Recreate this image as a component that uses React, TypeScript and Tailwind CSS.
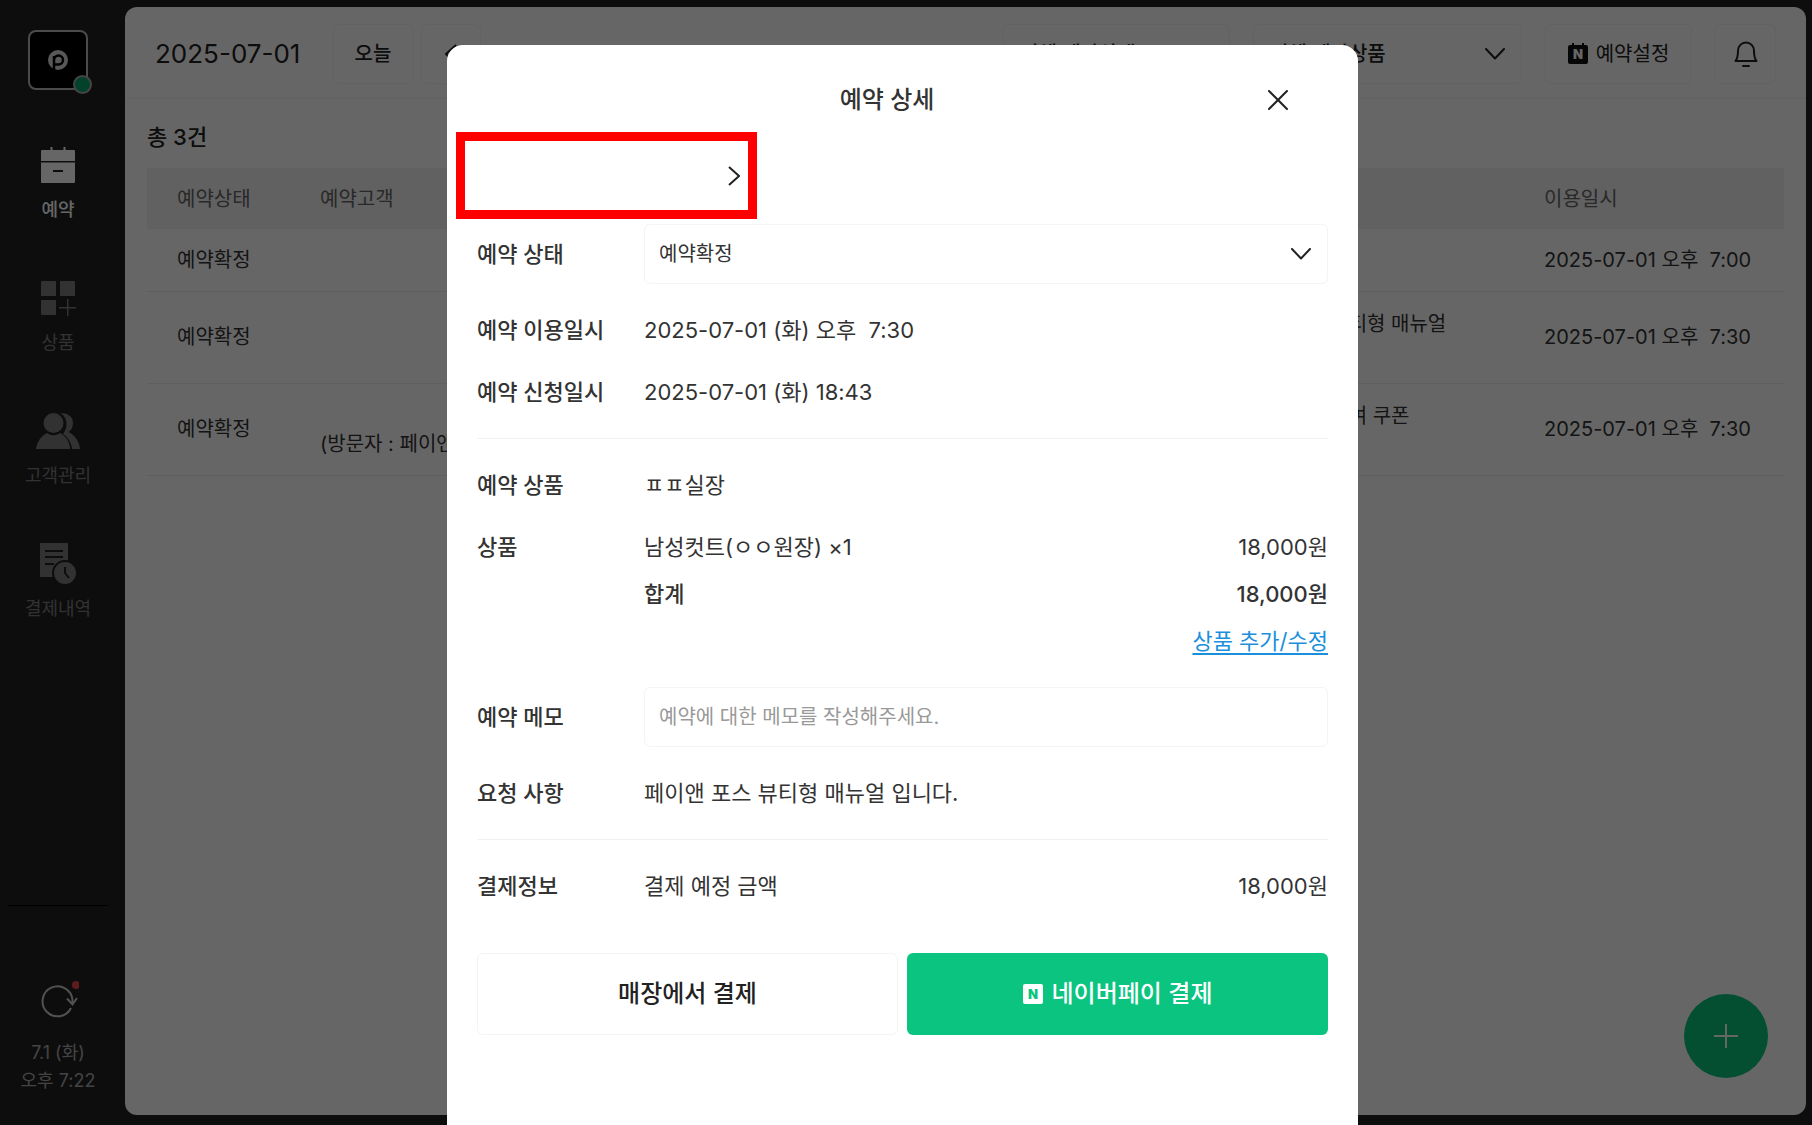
import { ReactNode } from 'react';

interface Booking {
  status: string;
  visitor?: string;
  product?: string;
  option?: string;
  date: string;
  height: string;
}

const bookings: Booking[] = [
  { status: '예약확정', date: '2025-07-01 오후\u00a0 7:00', height: 'h-[62px]' },
  { status: '예약확정', product: '페이앤 포스 뷰티형 매뉴얼', option: '남성컷트', date: '2025-07-01 오후\u00a0 7:30', height: 'h-[92px]' },
  { status: '예약확정', visitor: '페이앤', product: '첫방문 고객 참여 쿠폰', option: '남성컷트', date: '2025-07-01 오후\u00a0 7:30', height: 'h-[92px]' },
];

function ChevronDown() {
  return (
    <svg className="pointer-events-none absolute right-[17px] top-1/2 -translate-y-1/2" width="20" height="12" viewBox="0 0 20 12" fill="none" stroke="#222" strokeWidth="2" strokeLinecap="round" strokeLinejoin="round">
      <path d="M1 1l9 9.5L19 1" />
    </svg>
  );
}

function CalendarIcon() {
  return (
    <svg width="36" height="36" viewBox="0 0 36 36" fill="currentColor">
      <path d="M10.500 0h2v3h11V0h2v3H34a1 1 0 0 1 1 1v10H1V4a1 1 0 0 1 1-1h8.500z" />
      <path fillRule="evenodd" d="M1 15.500h34V35a1 1 0 0 1-1 1H2a1 1 0 0 1-1-1zM13 23v2h10v-2z" />
    </svg>
  );
}

function ProductIcon() {
  return (
    <svg width="36" height="36" viewBox="0 0 36 36" fill="currentColor">
      <rect x="1" y="1" width="15" height="15" rx="1" />
      <rect x="20" y="1" width="15" height="15" rx="1" />
      <rect x="1" y="20" width="15" height="15" rx="1" />
      <path d="M27 19h1.500v8H36v1.500h-7.500V36H27v-7.500h-8V27h8z" />
    </svg>
  );
}

function CustomerIcon() {
  return (
    <svg width="44" height="36" viewBox="0 0 44 36" fill="currentColor">
      <path d="M24 0c7 0 13 3 13 10 0 4-1.500 7-4.500 9C39 22 43.500 29 44 36h-8c-.5-6-4-12-9-15 2-2.500 3.500-6 3.500-10C30.500 6 28 2 24 0z" />
      <circle cx="17.500" cy="10" r="10" />
      <path d="M0 36c1-7 5-13 11-16 4 3 9 3 13 0 6 3 10 9 10 16z" />
    </svg>
  );
}

function HistoryIcon() {
  return (
    <svg width="38" height="42" viewBox="0 0 38 42" fill="none" stroke="#222" strokeWidth="2">
      <path d="M2 0h26a1 1 0 0 1 1 1v33H2a1 1 0 0 1-1-1V1a1 1 0 0 1 1-1z" fill="currentColor" stroke="none" />
      <path d="M6 8h18M6 14h18M6 21h9" />
      <circle cx="26" cy="30" r="12" fill="currentColor" />
      <path d="M26 24v6l4 5" />
    </svg>
  );
}

interface NavItemProps {
  icon: ReactNode;
  label: string;
  active?: boolean;
}

function NavItem({ icon, label, active }: NavItemProps) {
  return (
    <a href="#" className={`flex h-[133px] flex-col items-center ${active ? 'font-medium text-[#fff]' : 'text-[#7d7d7d]'}`}>
      <span className="flex h-[42px] items-center">{icon}</span>
      <span className="mt-3 text-[18px] leading-6">{label}</span>
    </a>
  );
}

function Sidebar() {
  return (
    <aside className="flex w-[125px] shrink-0 flex-col pr-[9px]">
      <div className="relative mx-auto mt-[30px] flex size-[60px] items-center justify-center rounded-lg border-2 border-[#bbb] bg-black">
        <svg width="20" height="20" viewBox="0 0 20 20">
          <circle cx="10" cy="10" r="10" fill="#ddd" />
          <path d="M6 20V6M6 10a4.500 4.500 0 1 1 4.500 4.500H6" fill="none" stroke="#000" strokeWidth="2.500" />
        </svg>
        <span className="absolute -bottom-1.5 -right-1.5 size-[19px] rounded-full border-2 border-[#aaa] bg-[#07a56c]"></span>
      </div>
      <nav className="mt-[54px] flex flex-col">
        <NavItem icon={<CalendarIcon />} label="예약" active />
        <NavItem icon={<ProductIcon />} label="상품" />
        <NavItem icon={<CustomerIcon />} label="고객관리" />
        <NavItem icon={<HistoryIcon />} label="결제내역" />
      </nav>
      {/* 동기화 및 현재 시각 */}
      <div className="mx-2 mt-auto flex h-[220px] flex-col items-center border-t border-black pt-[74px] text-[#aaa]">
        <button type="button" aria-label="새로고침" className="text-[#ccc]">
          <svg width="42" height="42" viewBox="0 0 42 42" fill="none" stroke="currentColor" strokeWidth="2">
            <path d="M34 28A15 15 0 1 1 35.500 20v4M30 18.500l5.500 6 4.500-6.500" />
            <circle cx="39" cy="5" r="4" fill="#e5484d" stroke="none" />
          </svg>
        </button>
        <p className="mt-[17px] text-center text-[18px] leading-7">
          7.1 (화)
          <br />
          오후 7:22
        </p>
      </div>
    </aside>
  );
}

function Toolbar() {
  return (
    <header className="flex h-[92px] shrink-0 items-center border-b border-[#f2f2f2] px-[30px] pt-[2px] text-[20px] text-[#222]">
      <h1 className="w-[178px] text-[26px]">2025-07-01</h1>
      <button type="button" className="h-[60px] w-20 rounded-md border border-[#f5f5f5] font-medium">오늘</button>
      <button type="button" aria-label="이전" className="ml-2 flex h-[60px] w-[60px] items-center justify-center rounded-md border border-[#f5f5f5]">
        <svg width="12" height="20" viewBox="0 0 12 20" fill="none" stroke="currentColor" strokeWidth="2">
          <path d="M11 1L1 10l10 9" />
        </svg>
      </button>
      <div className="ml-auto flex gap-[23px]">
        <div className="relative h-[60px] w-[227px]">
          <select aria-label="예약상태" className="size-full appearance-none rounded-md border border-[#f5f5f5] pl-4 font-medium">
            <option>전체 예약상태</option>
          </select>
          <ChevronDown />
        </div>
        <div className="relative h-[60px] w-[269px]">
          <select aria-label="예약상품" className="size-full appearance-none rounded-md border border-[#f5f5f5] pl-4 font-medium">
            <option>전체 예약상품</option>
          </select>
          <ChevronDown />
        </div>
        <button type="button" className="flex h-[60px] w-[147px] items-center justify-center gap-2 rounded-md border border-[#f5f5f5]">
          <svg width="20" height="21" viewBox="0 0 20 21">
            <path d="M4 0h2v2h8V0h2v2h2a2 2 0 0 1 2 2v15a2 2 0 0 1-2 2H2a2 2 0 0 1-2-2V4a2 2 0 0 1 2-2h2z" fill="#111" />
            <text x="10" y="16" textAnchor="middle" fontSize="13" fontWeight="900" fill="#fff">N</text>
          </svg>
          예약설정
        </button>
        <button type="button" aria-label="알림" className="flex h-[60px] w-[61px] items-center justify-center rounded-md border border-[#f5f5f5]">
          <svg width="24" height="26" viewBox="0 0 24 26" fill="none" stroke="currentColor" strokeWidth="2" strokeLinecap="round" strokeLinejoin="round">
            <path d="M1.500 20C4 17 4 14 4 9.500a8 8 0 0 1 16 0c0 4.500 0 7.500 2.500 10.500zM9 25h6" />
          </svg>
        </button>
      </div>
    </header>
  );
}

function BookingTable() {
  return (
    <section className="px-[22px] text-[20px] text-[#333]">
      <h2 className="pb-4 pt-[23px] text-[22px] font-medium leading-[30px] text-[#222]">총 3건</h2>
      <table className="w-full table-fixed text-left">
        <thead className="bg-[#f2f2f4] text-[#666]">
          <tr className="h-[61px]">
            <th className="w-[142px] pl-[30px] font-normal">예약상태</th>
            <th className="w-[907px] pl-[31px] font-normal">예약고객</th>
            <th className="pl-[31px] font-normal"></th>
            <th className="w-[271px] pl-[31px] font-normal">이용일시</th>
          </tr>
        </thead>
        <tbody>
          {bookings.map((booking, index) => (
            <tr key={index} className={`border-b border-[#eee] ${booking.height}`}>
              <td className="pl-[30px]">{booking.status}</td>
              <td className="pl-[31px] leading-[30px]">
                {booking.visitor && (
                  <>
                    <br />
                    (방문자 : {booking.visitor})
                  </>
                )}
              </td>
              <td className="whitespace-nowrap pl-[31px] leading-[26px]">
                {booking.product}
                <br />
                {booking.option}
              </td>
              <td className="whitespace-nowrap pl-[31px]">{booking.date}</td>
            </tr>
          ))}
        </tbody>
      </table>
    </section>
  );
}

interface DetailRowProps {
  label: string;
  children: ReactNode;
}

function DetailRow({ label, children }: DetailRowProps) {
  return (
    <div className="flex">
      <div className="w-[167px] shrink-0 font-medium">{label}</div>
      <div className="min-w-0 flex-1">{children}</div>
    </div>
  );
}

function BookingDetail() {
  return (
    <div role="dialog" aria-label="예약 상세" className="min-h-full w-[911px] rounded-t-2xl bg-white text-[22px] leading-8 text-[#333]">
      <div className="grid h-[87px] grid-cols-[1fr_auto_1fr] items-center pr-[31px] pt-[22px]">
        <h2 className="col-start-2 text-[24px] font-medium">예약 상세</h2>
        <button type="button" aria-label="닫기" className="mr-[29px] flex size-10 items-center justify-center justify-self-end">
          <svg width="20" height="20" viewBox="0 0 20 20" stroke="#222" strokeWidth="2" strokeLinecap="round">
            <path d="M1 1l18 18M19 1L1 19" />
          </svg>
        </button>
      </div>
      <button type="button" aria-label="고객 정보" className="ml-[9px] flex h-[87px] w-[301px] items-center justify-end border-[9px] border-[#ff0000] pr-2">
        <svg width="12" height="20" viewBox="0 0 12 20" fill="none" stroke="#222" strokeWidth="2">
          <path d="M1 1l10 9-10 9" />
        </svg>
      </button>
      <div className="mt-[5px] flex flex-col gap-[30px] px-[30px]">
        <div className="flex items-center">
          <label htmlFor="status" className="w-[167px] shrink-0 font-medium">예약 상태</label>
          <div className="relative h-[60px] flex-1">
            <select id="status" className="size-full appearance-none rounded-md border border-[#f4f4f4] pl-[14px] text-[20px]">
              <option>예약확정</option>
            </select>
            <ChevronDown />
          </div>
        </div>
        <DetailRow label="예약 이용일시">2025-07-01 (화) 오후&nbsp; 7:30</DetailRow>
        <DetailRow label="예약 신청일시">2025-07-01 (화) 18:43</DetailRow>
        <hr className="border-[#f2f2f2]" />
        <DetailRow label="예약 상품">ㅍㅍ실장</DetailRow>
        <DetailRow label="상품">
          <div className="flex flex-col gap-[15px]">
            <div className="flex justify-between">
              <span>남성컷트(ㅇㅇ원장) ×1</span>
              <span>18,000원</span>
            </div>
            <div className="flex justify-between font-medium">
              <span>합계</span>
              <span>18,000원</span>
            </div>
            <a href="#" className="self-end text-[#1a8fdc] underline underline-offset-4">상품 추가/수정</a>
          </div>
        </DetailRow>
        <div className="flex items-center">
          <label htmlFor="memo" className="w-[167px] shrink-0 font-medium">예약 메모</label>
          <input id="memo" type="text" placeholder="예약에 대한 메모를 작성해주세요." className="h-[60px] min-w-0 flex-1 rounded-md border border-[#f4f4f4] px-[14px] text-[20px] placeholder:text-[#999]" />
        </div>
        <DetailRow label="요청 사항">페이앤 포스 뷰티형 매뉴얼 입니다.</DetailRow>
        <hr className="border-[#f2f2f2]" />
        <DetailRow label="결제정보">
          <div className="flex justify-between">
            <span>결제 예정 금액</span>
            <span>18,000원</span>
          </div>
        </DetailRow>
      </div>
      <div className="mt-[51px] grid grid-cols-2 gap-[9px] px-[30px] text-[24px] font-medium">
        <button type="button" className="h-[82px] rounded-md border border-[#f4f4f4] text-[#222]">매장에서 결제</button>
        <button type="button" className="flex h-[82px] items-center justify-center gap-[9px] rounded-md bg-[#0bc480] text-white">
          <svg width="20" height="20" viewBox="0 0 20 20">
            <rect width="20" height="20" rx="2" fill="#fff" />
            <text x="10" y="15" textAnchor="middle" fontSize="13" fontWeight="900" fill="#0bc480">N</text>
          </svg>
          네이버페이 결제
        </button>
      </div>
    </div>
  );
}

export default function App() {
  return (
    <div className="relative h-screen overflow-hidden bg-[#222] font-['Inter','Noto_Sans_CJK_KR',sans-serif]">
      <div className="flex h-full">
        <Sidebar />
        <main className="relative mb-[10px] mr-[6px] mt-[7px] flex min-w-0 flex-1 flex-col rounded-xl bg-white">
          <Toolbar />
          <BookingTable />
          <button type="button" aria-label="예약 추가" className="absolute bottom-[37px] right-[38px] flex size-[84px] items-center justify-center rounded-full bg-[#0ac67c]">
            <svg width="24" height="24" viewBox="0 0 24 24" stroke="#fff" strokeWidth="2">
              <path d="M12 0v24M0 12h24" />
            </svg>
          </button>
        </main>
      </div>
      {/* 예약 상세 모달 */}
      <div className="absolute inset-0 flex justify-center bg-black/60 pr-[7px] pt-[45px]">
        <BookingDetail />
      </div>
    </div>
  );
}
